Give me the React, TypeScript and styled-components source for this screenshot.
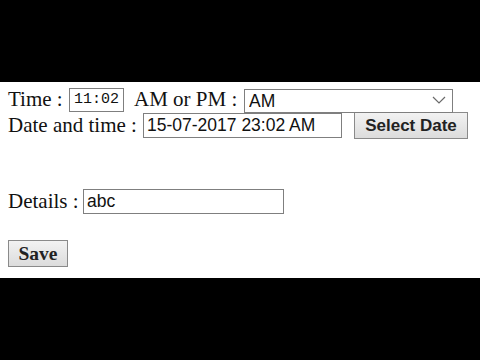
import React from "react";
import styled, { createGlobalStyle } from "styled-components";

const Global = createGlobalStyle`
  html, body {
    margin: 0;
    padding: 0;
    background: #000;
  }
  body {
    width: 480px;
    height: 360px;
    overflow: hidden;
  }
`;

const Screen = styled.div`
  width: 480px;
  height: 360px;
  display: flex;
  flex-direction: column;
  background: #000;
`;

const Bar = styled.div<{ $h: number }>`
  height: ${(p) => p.$h}px;
  background: #000;
  flex-shrink: 0;
`;

const Page = styled.form`
  height: 196px;
  background: #fff;
  padding: 5px 0 0 8px;
  box-sizing: border-box;
  display: flex;
  flex-direction: column;
  font-family: "Liberation Serif", "Times New Roman", serif;
  font-size: 21px;
  color: #111;
`;

const Row = styled.div<{ $h: number; $mt?: number }>`
  display: flex;
  align-items: center;
  height: ${(p) => p.$h}px;
  margin-top: ${(p) => p.$mt ?? 0}px;
`;

const Label = styled.label<{ $w: number; $pl?: number }>`
  width: ${(p) => p.$w}px;
  padding-left: ${(p) => p.$pl ?? 0}px;
  box-sizing: border-box;
  flex-shrink: 0;
  white-space: nowrap;
  line-height: 1;
`;

const Field = styled.input<{ $w: number; $h: number; $mono?: boolean; $ml?: number }>`
  width: ${(p) => p.$w}px;
  height: ${(p) => p.$h}px;
  margin: 0 0 0 ${(p) => p.$ml ?? 0}px;
  box-sizing: border-box;
  border: 1px solid #7f7f7f;
  background: #fff;
  padding: 0 ${(p) => (p.$mono ? 2 : 3)}px;
  font-family: ${(p) =>
    p.$mono ? `"Liberation Mono", "Courier New", monospace` : `"Liberation Sans", Arial, sans-serif`};
  font-size: ${(p) => (p.$mono ? 15 : 17.5)}px;
  text-align: ${(p) => (p.$mono ? "center" : "left")};
  color: #111;
  outline: none;
`;

const SelectWrap = styled.div`
  position: relative;
  width: 209px;
  height: 24px;
`;

const Select = styled.select`
  width: 100%;
  height: 100%;
  appearance: none;
  -webkit-appearance: none;
  box-sizing: border-box;
  border: 1px solid #7f7f7f;
  border-radius: 0;
  background: #fff;
  padding: 0 0 0 4px;
  margin: 0;
  font-family: "Liberation Sans", Arial, sans-serif;
  font-size: 17.5px;
  color: #111;
  outline: none;
`;

const Chevron = styled.svg`
  position: absolute;
  right: 7px;
  top: 8px;
  pointer-events: none;
`;

const Button = styled.button<{ $w: number; $serif?: boolean; $ml?: number }>`
  width: ${(p) => p.$w}px;
  height: 27px;
  margin: 0 0 0 ${(p) => p.$ml ?? 0}px;
  box-sizing: border-box;
  border: 1px solid #8a8a8a;
  border-radius: 0;
  background: linear-gradient(#f2f2f2, #dcdcdc);
  padding: 0;
  font-family: ${(p) =>
    p.$serif ? `"Liberation Serif", "Times New Roman", serif` : `"Liberation Sans", Arial, sans-serif`};
  font-weight: bold;
  font-size: ${(p) => (p.$serif ? 19.5 : 17)}px;
  color: #222;
`;

export default function App() {
  return (
    <Screen>
      <Global />
      <Bar $h={82} />
      <Page onSubmit={(e) => e.preventDefault()}>
        <Row $h={25}>
          <Label $w={61}>Time :</Label>
          <Field $w={55} $h={24} $mono defaultValue="11:02" />
          <Label $w={120} $pl={10}>AM or PM :</Label>
          <SelectWrap>
            <Select defaultValue="AM">
              <option>AM</option>
              <option>PM</option>
            </Select>
            <Chevron width="14" height="8" viewBox="0 0 14 8">
              <path d="M1 1 L7 7 L13 1" fill="none" stroke="#6a6a6a" strokeWidth="1.2" />
            </Chevron>
          </SelectWrap>
        </Row>
        <Row $h={27}>
          <Label $w={135}>Date and time :</Label>
          <Field $w={199} $h={25} defaultValue="15-07-2017 23:02 AM" />
          <Button $w={114} $ml={12} type="button">Select Date</Button>
        </Row>
        <Row $h={25} $mt={50}>
          <Label $w={75}>Details :</Label>
          <Field $w={201} $h={25} defaultValue="abc" />
        </Row>
        <Row $h={27} $mt={26}>
          <Button $w={60} $serif type="submit">Save</Button>
        </Row>
      </Page>
      <Bar $h={82} />
    </Screen>
  );
}
